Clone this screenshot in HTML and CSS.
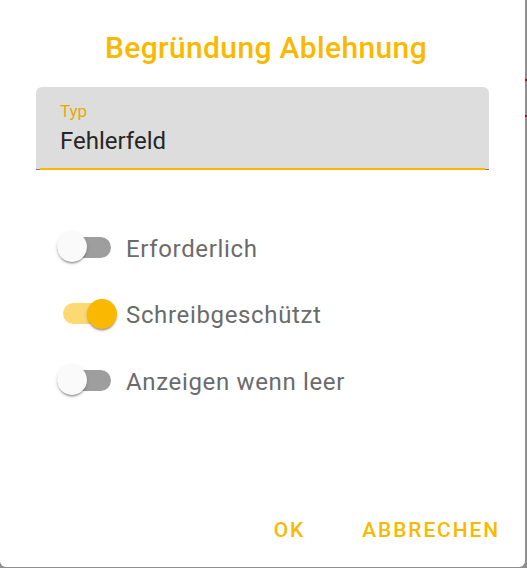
FILE: index.html
```html
<!DOCTYPE html>
<html lang="de">
<head>
<meta charset="utf-8">
<title>Begründung Ablehnung</title>
<link rel="stylesheet" href="styles.css">
</head>
<body>
<div class="backdrop-mark mark-a"></div>
<div class="backdrop-mark mark-b"></div>
<div class="dialog">
  <h1 class="title">Begründung Ablehnung</h1>
  <div class="field">
    <div class="field-label">Typ</div>
    <div class="field-value">Fehlerfeld</div>
    <div class="underline"><div class="underline-active"></div></div>
  </div>
  <div class="toggles">
    <div class="toggle-row">
      <div class="toggle"><div class="track"></div><div class="thumb"></div></div>
      <span class="toggle-label">Erforderlich</span>
    </div>
    <div class="toggle-row">
      <div class="toggle on"><div class="track"></div><div class="thumb"></div></div>
      <span class="toggle-label">Schreibgeschützt</span>
    </div>
    <div class="toggle-row">
      <div class="toggle"><div class="track"></div><div class="thumb"></div></div>
      <span class="toggle-label">Anzeigen wenn leer</span>
    </div>
  </div>
  <div class="actions">
    <button class="btn">OK</button>
    <button class="btn">ABBRECHEN</button>
  </div>
</div>
</body>
</html>
```
FILE: styles.css
```css
* { box-sizing: border-box; }
html, body {
  margin: 0;
  padding: 0;
  height: 100%;
}
body {
  background: #8f8f8f;
  font-family: Roboto, "Noto Sans", "Liberation Sans", sans-serif;
  overflow: hidden;
  position: relative;
}
.backdrop-mark {
  position: absolute;
  left: 525px;
  width: 2px;
  height: 2px;
  background: #a01010;
}
.mark-a { top: 79px; }
.mark-b { top: 115px; }

.dialog {
  width: 525px;
  height: 567px;
  background: #fff;
  border-radius: 0 0 6px 6px;
  padding: 30px 36px 10px;
  display: flex;
  flex-direction: column;
}
.title {
  margin: 0;
  padding-left: 7px;
  font-size: 30px;
  line-height: 36px;
  font-weight: 500;
  color: #fbb800;
  text-align: center;
  letter-spacing: 0.35px;
  white-space: nowrap;
}
.field {
  margin-top: 21px;
  background: #dddddd;
  border-radius: 6px 6px 0 0;
  padding: 14px 0 0;
}
.field-label {
  padding-left: 24px;
  font-size: 17px;
  line-height: 20px;
  color: #e6aa00;
}
.field-value {
  padding-left: 24px;
  margin-top: 5px;
  font-size: 24px;
  line-height: 30px;
  color: #262626;
}
.underline {
  margin-top: 12px;
  height: 2px;
  display: flex;
  background: linear-gradient(to bottom, transparent 50%, #7a7a7a 50%);
}
.underline-active {
  flex: 1;
  margin: 0 4px;
  background: #fbb800;
}
.toggles {
  margin-top: 59px;
  display: flex;
  flex-direction: column;
  gap: 30.5px;
}
.toggle-row {
  display: flex;
  align-items: center;
  height: 36px;
  padding-left: 21px;
}
.toggle {
  position: relative;
  width: 60px;
  height: 30px;
  margin-right: 9px;
  flex: none;
}
.track {
  position: absolute;
  left: 0;
  top: 4.5px;
  width: 54px;
  height: 21px;
  border-radius: 10.5px;
  background: #9e9e9e;
}
.thumb {
  position: absolute;
  left: 0;
  top: 0;
  width: 30px;
  height: 30px;
  border-radius: 50%;
  background: #fafafa;
  box-shadow: 0 3px 1.5px -1.5px rgba(0,0,0,.2), 0 1.5px 1.5px 0 rgba(0,0,0,.14), 0 1.5px 4.5px 0 rgba(0,0,0,.12);
}
.toggle.on .track {
  left: 6px;
  width: 48px;
  background: #fdd974;
}
.toggle.on .thumb {
  left: 29.5px;
  background: #fbb800;
}
.toggle-label {
  font-size: 24px;
  line-height: 30px;
  margin-top: 3px;
  color: #6b6b6b;
  letter-spacing: 0.65px;
  white-space: nowrap;
}
.actions {
  margin-top: auto;
  margin-right: -35px;
  display: flex;
  justify-content: flex-end;
  gap: 9px;
}
.btn {
  border: 0;
  background: transparent;
  font-family: inherit;
  font-size: 21px;
  font-weight: 500;
  letter-spacing: 1.875px;
  line-height: 54px;
  height: 54px;
  padding: 0 24px;
  color: #fbb800;
  cursor: pointer;
}
```
